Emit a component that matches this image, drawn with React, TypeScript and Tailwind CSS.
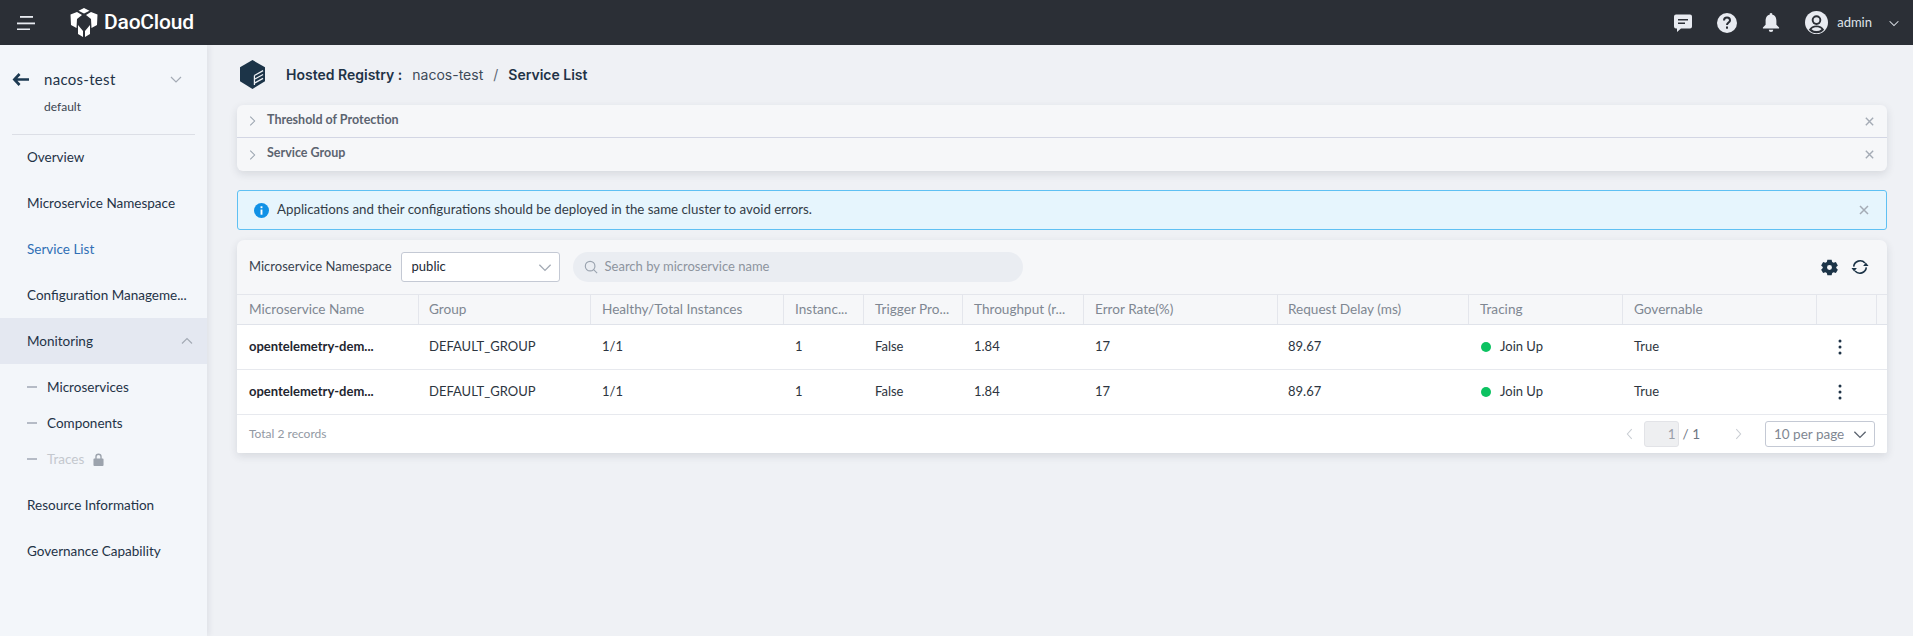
import React from "react";

const font = "font-['Lato','Noto_Sans',sans-serif]";
const cols = "grid grid-cols-[182px_172px_193px_80px_99px_121px_194px_191px_154px_194px_60px_10px]";

const Chevron = ({ d = "M3 6l5 5 5-5", c = "w-4 h-4 text-[#9aa3af]" }: { d?: string; c?: string }) => (
  <svg viewBox="0 0 16 16" className={c} fill="none" stroke="currentColor" strokeWidth="1.2"><path d={d} /></svg>
);
const X = ({ c }: { c: string }) => (
  <svg viewBox="0 0 12 12" className={c} fill="none" stroke="#a4abb5" strokeWidth="1.5"><path d="M2 2l8 8M10 2l-8 8" /></svg>
);

const Logo = () => (
  <svg viewBox="0 0 28 30" className="w-[28px] h-[30px]" fill="#fff">
    <path d="M14 0l5.500 2.800L14 5.600 8.500 2.800zM.5 6.500L7 4l5 3-5 4-.5 9L1 17zM27.500 6.500L21 4l-5 3 5 4 .5 9 5.500-3zM8 17l5 6v6l-5-3zM20 17l-5 6v6l5-3z" />
  </svg>
);

const Nav = ({ t, active, bg }: { t: string; active?: boolean; bg?: boolean }) => (
  <div className={`h-[46px] pl-[27px] pr-[12px] flex items-center justify-between text-[13.5px] ${active ? "text-[#2f6fb5]" : "text-[#1f3347]"} ${bg ? "bg-[#e4e8f1]" : ""}`}>
    <span className="whitespace-nowrap">{t}</span>
    {bg && <Chevron d="M3 10.500l5-5 5 5" c="w-[16px] h-[16px] text-[#a4abb5]" />}
  </div>
);

const Sub = ({ t, off }: { t: string; off?: boolean }) => (
  <div className="h-[36px] pl-[27px] flex items-center text-[13.5px]">
    <span className="w-[10px] h-[1.5px] bg-[#b5bbc6] mr-[10px]" />
    <span className={off ? "text-[#c4c8ce]" : "text-[#1f3347]"}>{t}</span>
    {off && (
      <svg viewBox="0 0 12 14" className="w-[11px] h-[13px] ml-[9px]" fill="#9ca3ad">
        <path d="M2.500 6V4a3.500 3.500 0 017 0v2h1a1 1 0 011 1v6a1 1 0 01-1 1h-9a1 1 0 01-1-1V7a1 1 0 011-1zm1.500 0h4V4a2 2 0 00-4 0z" />
      </svg>
    )}
  </div>
);

const Accordion = ({ t, border }: { t: string; border?: boolean }) => (
  <div className={`flex items-center h-[33px] pl-[8px] pr-[12px] ${border ? "border-b border-[#d3d6e4]" : ""}`}>
    <Chevron d="M6 3l5 5-5 5" c="w-[14px] h-[14px] text-[#9aa3af]" />
    <span className="ml-[8px] pb-[2px] text-[12.500px] font-bold text-[#5c6470] flex-1">{t}</span>
    <X c="w-[11px] h-[11px]" />
  </div>
);

const heads = ["Microservice Name", "Group", "Healthy/Total Instances", "Instanc...", "Trigger Pro...", "Throughput (r...", "Error Rate(%)", "Request Delay (ms)", "Tracing", "Governable", "", ""];

const Row = () => (
  <div className={`${cols} h-[45px] items-center text-[13px] text-[#2d3540] border-b border-[#e7e9ee] bg-white`}>
    <div className="pl-3 font-bold text-[#1f2630] whitespace-nowrap">opentelemetry-dem...</div>
    <div className="pl-[10px]">DEFAULT_GROUP</div>
    <div className="pl-[11px]">1/1</div>
    <div className="pl-[11px]">1</div>
    <div className="pl-[11px]">False</div>
    <div className="pl-[11px]">1.84</div>
    <div className="pl-[11px]">17</div>
    <div className="pl-[10px]">89.67</div>
    <div className="pl-[12px] flex items-center">
      <span className="w-[10px] h-[10px] rounded-full bg-[#0cc261] mr-[9px]" />Join Up
    </div>
    <div className="pl-[11px]">True</div>
    <div className="flex pl-[21px]">
      <svg viewBox="0 0 4 16" className="w-[4px] h-[16px]" fill="#1f3347"><circle cx="2" cy="2" r="1.500" /><circle cx="2" cy="8" r="1.500" /><circle cx="2" cy="14" r="1.500" /></svg>
    </div>
    <div />
  </div>
);

export default function App() {
  return (
    <div className={`h-screen overflow-hidden flex flex-col bg-[#eff1f5] ${font}`}>
      <header className="h-[45px] shrink-0 bg-[#2b2f36] flex items-center text-white">
        <svg viewBox="0 0 18 14" className="w-[18px] h-[14px] ml-[17px]" fill="#e8ebf1"><rect x="3" width="13" height="1.800" y="0" /><rect width="18" height="1.800" y="6.500" /><rect width="13" height="1.800" y="12.500" /></svg>
        <div className="ml-[35px]"><Logo /></div>
        <span className="ml-[6px] text-[21px] font-medium tracking-[-0.2px] font-['Roboto',sans-serif]">DaoCloud</span>
        <div className="ml-auto flex items-center">
          <svg viewBox="0 0 20 20" className="w-[20px] h-[20px]" fill="#e8ebf1"><path d="M3 1.500h14a2 2 0 012 2v10a2 2 0 01-2 2H8l-4 3.500v-3.500H3a2 2 0 01-2-2v-10a2 2 0 012-2z" /><path d="M5 6h10v1.500H5zM5 9.500h7V11H5z" fill="#2b2f36" /></svg>
          <svg viewBox="0 0 20 20" className="w-[20px] h-[20px] ml-[24px]"><circle cx="10" cy="10" r="10" fill="#e8ebf1" /><path d="M7 7.500a3 3 0 116 0c0 2-3 2.200-3 4.500" fill="none" stroke="#2b2f36" strokeWidth="2" /><rect x="9" y="13.500" width="2" height="2.200" fill="#2b2f36" /></svg>
          <svg viewBox="0 0 20 22" className="w-[18px] h-[20px] ml-[25px]" fill="#e8ebf1"><path d="M10 0a1.500 1.500 0 011.500 1.800C15 2.600 16 5.500 16 9v4l3 3v1H1v-1l3-3V9c0-3.500 1-6.400 4.500-7.200A1.500 1.500 0 0110 0zM7.500 18.500h5a2.500 2.500 0 01-5 0z" /></svg>
          <svg viewBox="0 0 24 24" className="w-[23px] h-[23px] ml-[25px]"><circle cx="12" cy="12" r="12" fill="#e8ebf1" /><circle cx="12" cy="9.500" r="5" fill="#2b2f36" /><circle cx="12" cy="9.500" r="3" fill="#e8ebf1" /><path d="M4 19.500c1.500-3 4.800-4.500 8-4.500s6.500 1.500 8 4.500a10.500 10.500 0 01-16 0z" fill="#2b2f36" /><path d="M6.800 19c1.200-1.300 3.200-2 5.200-2s4 .7 5.200 2a8 8 0 01-10.400 0z" fill="#e8ebf1" /></svg>
          <span className="ml-[9px] text-[13px] text-[#dfe3ea]">admin</span>
          <Chevron c="w-[14px] h-[14px] text-[#dfe3ea] ml-[15px] mr-[12px]" />
        </div>
      </header>
      <div className="flex flex-1 min-h-0">
        <aside className="w-[207px] shrink-0 bg-[#f3f6fa] shadow-[2px_0_6px_rgba(30,40,60,0.08)]">
          <div className="h-[90px] pt-[23px] border-b border-[#dcdfe6] mx-[12px]">
            <div className="flex items-center h-[22px]">
              <svg viewBox="0 0 18 14" className="w-[17px] h-[15px]" fill="none" stroke="#1d3a52" strokeWidth="2.800"><path d="M18 7H2.500M8 1.200L2.500 7 8 12.800" /></svg>
              <span className="ml-[15px] text-[15px] tracking-[0.3px] text-[#1f3347]">nacos-test</span>
              <Chevron c="w-[16px] h-[16px] text-[#a4abb5] ml-auto mr-[11px]" />
            </div>
            <div className="mt-[8px] ml-[32px] text-[12px] text-[#3a4450]">default</div>
          </div>
          <div className="-mt-px">
            <Nav t="Overview" />
            <Nav t="Microservice Namespace" />
            <Nav t="Service List" active />
            <Nav t="Configuration Manageme..." />
            <Nav t="Monitoring" bg />
          </div>
          <div className="pt-[5px] pb-[5px]">
            <Sub t="Microservices" />
            <Sub t="Components" />
            <Sub t="Traces" off />
          </div>
          <Nav t="Resource Information" />
          <Nav t="Governance Capability" />
        </aside>
        <main className="flex-1 min-w-0 pl-[30px] pr-[26px]">
          <div className="h-[60px] flex items-center pb-[1px] font-['Inter',sans-serif] text-[14px]">
            <svg viewBox="0 0 26 30" className="w-[25px] h-[29px] ml-[3px]"><path d="M13 0l13 7.500V22l-13 8-13-8V7.500z" fill="#1c3448" /><path d="M15 16l9-5M15 20l9-5M15 24l9-5M15 16v10" stroke="#eff1f5" strokeWidth="1.300" fill="none" /></svg>
            <span className="ml-[21px] font-semibold text-[#1f3347]">Hosted Registry :</span>
            <span className="ml-[10px] text-[#3d4a58]">nacos-test</span>
            <span className="ml-[10px] text-[#5f6975]">/</span>
            <span className="ml-[10px] font-semibold text-[#1f3347]">Service List</span>
          </div>
          <div className="rounded-[6px] bg-[#f6f7f9] shadow-[0_3px_8px_rgba(30,40,60,0.12)]">
            <Accordion t="Threshold of Protection" border />
            <Accordion t="Service Group" />
          </div>
          <div className="mt-[19px] h-[40px] rounded-[3px] border border-[#5fc0f3] bg-[#e6f5fd] flex items-center pl-[16px] pr-[16px]">
            <svg viewBox="0 0 16 16" className="w-[15px] h-[15px]"><circle cx="8" cy="8" r="8" fill="#1191e6" /><rect x="7" y="7" width="2" height="5.500" fill="#fff" /><rect x="7" y="3.500" width="2" height="2" fill="#fff" /></svg>
            <span className="ml-[8px] pb-[1px] text-[13.300px] text-[#333c47] flex-1">Applications and their configurations should be deployed in the same cluster to avoid errors.</span>
            <X c="w-[12px] h-[12px]" />
          </div>
          <section className="mt-[10px] rounded-t-[7px] rounded-b-[2px] overflow-hidden bg-[#f6f7f9] shadow-[0_3px_8px_rgba(30,40,60,0.12)]">
            <div className="h-[55px] flex items-center pl-[12px] pr-[18px] border-b border-[#e4e6ec]">
              <span className="text-[13px] text-[#39424e]">Microservice Namespace</span>
              <div className="ml-[9px] w-[159px] h-[30px] bg-white border border-[#c4c9d4] rounded-[3px] flex items-center justify-between pl-[10px] pr-[5px] text-[13px] text-[#222a35]">
                public<Chevron c="w-[18px] h-[18px] text-[#a4abb5]" />
              </div>
              <div className="ml-[13px] w-[450px] h-[30px] rounded-full bg-[#eaedf2] flex items-center pl-[11px] text-[13px] text-[#8d949e]">
                <svg viewBox="0 0 16 16" className="w-[14px] h-[14px] mr-[7px]" fill="none" stroke="#9aa3af" strokeWidth="1.300"><circle cx="7" cy="7" r="5.500" /><path d="M11 11l4 4" /></svg>
                Search by microservice name
              </div>
              <svg viewBox="0 0 24 24" className="w-[17px] h-[17px] ml-auto" fill="#1c3448"><path fillRule="evenodd" d="M9 1h6l.8 3.100 2 1.100 3.200-1 2.800 4.800-2.300 2.200v1.600l2.300 2.200-2.800 4.800-3.200-1-2 1.100L15 23H9l-.8-3.100-2-1.100-3.200 1L.2 15l2.300-2.200v-1.600L.2 9 3 4.200l3.200 1 2-1.100zM12 8.500a3.500 3.500 0 100 7 3.500 3.500 0 000-7z" /></svg>
              <svg viewBox="0 0 20 20" className="w-[18px] h-[18px] ml-[13px]" fill="none" stroke="#1c3448" strokeWidth="1.800"><path d="M3 9.500a7.200 7.200 0 0112.500-4M17 10.500a7.200 7.200 0 01-12.500 4" /><path d="M19.500 9h-6l3-4zM.5 11h6l-3 4z" fill="#1c3448" stroke="none" /></svg>
            </div>
            <div className={`${cols} h-[30px] text-[13.600px] text-[#7f8792] border-b border-[#e0e3ea]`}>
              {heads.map((h, i) => (
                <div key={i} className={`flex items-center whitespace-nowrap overflow-hidden ${i === 0 ? "pl-3" : i === 1 || i === 7 ? "pl-[10px]" : "pl-[11px]"} ${i < 11 ? "border-r border-[#e4e6ec]" : ""}`}>{h}</div>
              ))}
            </div>
            <Row />
            <Row />
            <div className="h-[38px] bg-white flex items-center pl-3 pr-[12px]">
              <span className="text-[12px] text-[#9299a3]">Total 2 records</span>
              <Chevron d="M10 2.500L5 8l5 5.500" c="w-[14px] h-[14px] text-[#c9cdd3] ml-auto" />
              <div className="ml-[7px] w-[35px] h-[26px] rounded-[3px] bg-[#eeeff1] border border-[#e2e3e7] flex items-center justify-end pr-[2px] text-[13.500px] text-[#9aa0a9]">1</div>
              <span className="ml-[4px] text-[13.500px] text-[#6f7682]">/ 1</span>
              <Chevron d="M6 2.500L11 8l-5 5.500" c="w-[14px] h-[14px] text-[#c9cdd3] ml-[31px]" />
              <div className="ml-[20px] w-[110px] h-[26px] rounded-[3px] border border-[#c4c9d4] flex items-center justify-between pl-[8px] pr-[5px] text-[13.500px] text-[#7f8792]">
                10 per page<Chevron c="w-[18px] h-[18px] text-[#5c6470]" />
              </div>
            </div>
          </section>
        </main>
      </div>
    </div>
  );
}
